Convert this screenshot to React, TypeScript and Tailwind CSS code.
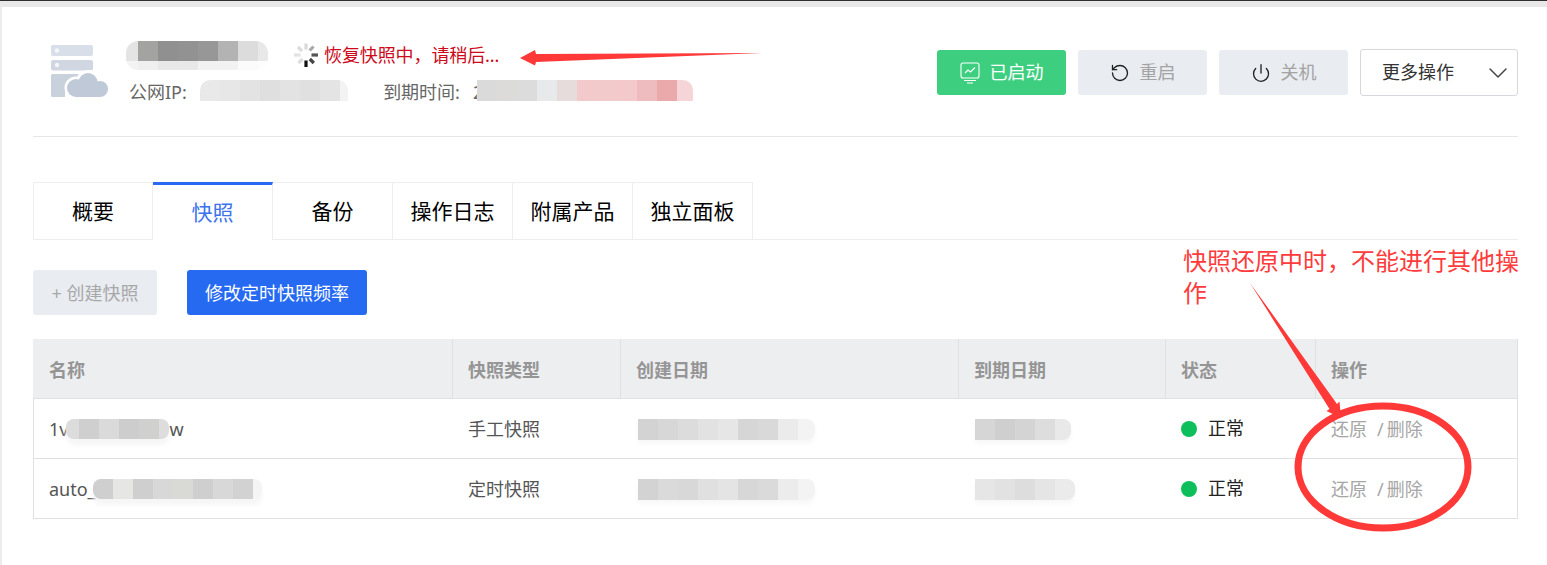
import React from 'react';
import { ChevronDown, Power, RotateCcw } from 'lucide-react';

type MosaicProps = { cells: string[]; widths?: number[]; className?: string };

// redacted bits of the screenshot: one row of flat blocks
const Mosaic: React.FC<MosaicProps> = ({ cells, widths, className }) => (
  <span className={`inline-flex shrink-0 overflow-hidden ${className ?? ''}`}>
    {cells.map((c, i) => (
      <span key={i} className="block h-full" style={{ backgroundColor: c, width: widths ? widths[i] : 20 }} />
    ))}
  </span>
);

const ServerIcon = () => (
  <svg width="58" height="53" viewBox="0 0 58 53" className="shrink-0">
    <rect x="0" y="0" width="42" height="11" rx="2" fill="#d9dfe9" />
    <circle cx="6" cy="5.500" r="2.200" fill="#f4f6f9" />
    <rect x="0" y="15" width="42" height="10.500" rx="2" fill="#d0d7e3" />
    <circle cx="6" cy="20" r="2.200" fill="#f4f6f9" />
    <rect x="0" y="29" width="34" height="23" rx="1.500" fill="#c9d1dd" />
    <g fill="#ffffff">
      <circle cx="25" cy="43" r="11.500" />
      <circle cx="37" cy="37" r="12" />
      <rect x="14" y="42" width="30" height="11" />
    </g>
    <g fill="#bfc9d7">
      <circle cx="25" cy="43" r="9" />
      <circle cx="37" cy="37.500" r="9.500" />
      <circle cx="49" cy="44" r="8" />
      <rect x="25" y="42" width="24" height="10" />
    </g>
  </svg>
);

const Spinner = () => (
  <svg width="26" height="26" viewBox="0 0 26 26" className="shrink-0">
    <g strokeWidth="3.200" fill="none">
      <path d="M13 1.500v6" stroke="#d8d8d8" />
      <path d="M20.500 4.500l-3.800 4" stroke="#a8a8a8" />
      <path d="M25 13h-6.500" stroke="#555555" />
      <path d="M20.800 21l-4-4" stroke="#444444" />
      <path d="M13 25v-6.500" stroke="#111111" />
      <path d="M5.500 21l4-4" stroke="#dddddd" />
      <path d="M1 13h6.500" stroke="#e2e2e2" />
      <path d="M5 5l4 4" stroke="#dcdcdc" />
    </g>
  </svg>
);

const MonitorIcon = () => (
  <svg width="20" height="22" viewBox="0 0 20 22" fill="none" stroke="#ffffff" strokeWidth="1.100" className="shrink-0">
    <rect x="1" y="1" width="18" height="15" rx="2" />
    <path d="M5 11l3-3 2.500 2L15 5.500" />
    <path d="M4 18.500h12M7 21h6" />
  </svg>
);

const rows = [
  {
    name: (
      <span className="flex items-center">
        1v
        <Mosaic
          className="-ml-[2px] h-[20px] rounded-[8px] shadow-[0_6px_5px_#f6f6f6]"
          cells={['#dcdcdc', '#cfcfcf', '#dadada', '#cdcdcd', '#d0d0ce', '#dddddd']}
          widths={[13, 20, 20, 20, 20, 10]}
        />
        w
      </span>
    ),
    type: '手工快照',
    created: ['#d3d3d3', '#d7d7d7', '#dcdcdc', '#e2e2e2', '#e6e6e6', '#d6d6d6', '#d9d9d9', '#ebebeb', '#f3f3f3'],
    createdWidths: [20, 20, 20, 20, 20, 20, 20, 20, 17],
    expire: ['#d6d6d6', '#cfcfcf', '#d4d4d4', '#dddddd', '#e9e9e9'],
    expireWidths: [20, 20, 20, 20, 16],
  },
  {
    name: (
      <span className="flex items-center">
        auto_
        <Mosaic
          className="-ml-[3px] h-[20px] rounded-[8px] shadow-[0_6px_5px_#f6f6f6]"
          cells={['#cfcfcf', '#e6e6e4', '#cfcfd0', '#d8d8d8', '#d9d9d5', '#cfcfd0', '#d8d8d8', '#d2d2d2', '#f4f4f4']}
          widths={[20, 20, 20, 20, 20, 20, 20, 20, 9]}
        />
      </span>
    ),
    type: '定时快照',
    created: ['#d3d3d3', '#dadada', '#d8d8d8', '#e0e0e0', '#e4e4e4', '#d7d7d7', '#dadada', '#ececec', '#f3f3f3'],
    createdWidths: [20, 20, 20, 20, 20, 20, 20, 20, 17],
    expire: ['#e6e6e6', '#e2e2e2', '#dddddd', '#e5e5e5', '#ebebeb'],
    expireWidths: [20, 20, 20, 20, 20],
  },
];

const tabs = ['概要', '快照', '备份', '操作日志', '附属产品', '独立面板'];

const App: React.FC = () => {
  return (
    <div className="relative h-[565px] w-full overflow-hidden bg-white font-['Noto_Sans','Noto_Sans_CJK_SC',sans-serif]">
      <div className="h-[7px] border-t border-[#2e2e2e] bg-[#e8e8e8]" />
      <div className="flex h-[558px]">
        <div className="w-[2px] bg-[#ececec]" />
        <div className="ml-[31px] w-[1485px]">
          {/* header */}
          <div className="flex h-[130px] items-start justify-between border-b border-[#e6e6e6]">
            <div className="flex items-start pt-[31px]">
              <div className="ml-[18px] mt-[7px]">
                <ServerIcon />
              </div>
              <div className="ml-[17px] flex flex-col">
                <div className="flex h-[34px] items-center">
                  <div className="flex w-[142px] flex-col overflow-hidden rounded-[12px]">
                    <Mosaic
                      className="h-[20px]"
                      cells={['#e4e4e4', '#a3a3a1', '#8f908f', '#929292', '#979797', '#b3b3b4', '#dcdcdc', '#e8e8e8']}
                      widths={[12, 20, 20, 20, 20, 20, 20, 10]}
                    />
                    <Mosaic
                      className="h-[9px]"
                      cells={['#f3f3f3', '#efefef', '#e8e8e8', '#e8e8e8', '#f2f2f2', '#f2f2f2', '#fbfbfb', '#fdfdfd']}
                      widths={[12, 20, 20, 20, 20, 20, 20, 10]}
                    />
                  </div>
                  <div className="ml-[25px]">
                    <Spinner />
                  </div>
                  <span className="ml-[5px] mt-[1px] text-[18px] tracking-[-0.1px] text-[#cc0a1a]">恢复快照中，请稍后...</span>
                </div>
                <div className="mt-[8px] flex h-[24px] items-center pl-[3px] text-[18px] text-[#666666]">
                  <span>公网IP:</span>
                  <span className="ml-[13px]">1</span>
                  <Mosaic
                    className="-ml-[10px] h-[21px] self-start rounded-t-[10px]"
                    cells={['#e8e9e8', '#e6e7e6', '#e3e3e3', '#dfdfdf', '#e3e3e3', '#e0e0e0', '#e4e4e4', '#f3f3f3']}
                    widths={[20, 20, 20, 20, 20, 20, 20, 8]}
                  />
                  <span className="ml-[35px]">到期时间:</span>
                  <span className="ml-[13px]">2</span>
                  <Mosaic
                    className="-ml-[6px] h-[21px] self-start rounded-tr-[10px]"
                    cells={['#dadada', '#dcdbd9', '#dcdcdc', '#e8e9ea', '#e6dcdc', '#f2cacc', '#f3c9cb', '#eebcbe', '#eaa9ab', '#f5d5d8']}
                    widths={[20, 20, 20, 20, 20, 40, 20, 20, 20, 16]}
                  />
                </div>
              </div>
            </div>
            <div className="flex items-center gap-[12px] pt-[42px] text-[18px]">
              <div className="flex h-[45px] w-[129px] items-center justify-center gap-[10px] rounded-[3px] bg-[#3dcf7f] text-white">
                <MonitorIcon />
                <span>已启动</span>
              </div>
              <div className="flex h-[45px] w-[129px] items-center justify-center gap-[10px] rounded-[3px] bg-[#e9ecf1] text-[#a3a3a3]">
                <RotateCcw size={20} strokeWidth={1.6} className="text-[#222222]" />
                <span>重启</span>
              </div>
              <div className="flex h-[45px] w-[129px] items-center justify-center gap-[10px] rounded-[3px] bg-[#e9ecf1] text-[#a3a3a3]">
                <Power size={20} strokeWidth={1.6} className="text-[#222222]" />
                <span>关机</span>
              </div>
              <div className="flex h-[47px] w-[158px] items-center justify-between rounded-[3px] border border-[#d6d8de] pl-[21px] pr-[3px] text-[#333333]">
                <span>更多操作</span>
                <ChevronDown size={32} strokeWidth={1.1} className="text-[#444444]" />
              </div>
            </div>
          </div>

          {/* tabs */}
          <div className="mt-[45px] flex h-[58px] border-b border-[#eeeeee]">
            {tabs.map((t, i) =>
              i === 1 ? (
                <div
                  key={t}
                  className="relative -mb-[1px] flex h-[58px] w-[120px] items-center justify-center border-r border-t-[3px] border-r-[#eeeeee] border-t-[#2a6af3] bg-white text-[21px] text-[#3b72ee]"
                >
                  {t}
                </div>
              ) : (
                <div
                  key={t}
                  className={`flex w-[120px] items-center justify-center border-r border-t border-[#eeeeee] pt-[2px] text-[21px] text-black ${i === 0 ? 'border-l' : ''}`}
                >
                  {t}
                </div>
              ),
            )}
          </div>

          {/* toolbar */}
          <div className="mt-[30px] flex gap-[30px] text-[18px]">
            <div className="flex h-[45px] w-[124px] items-center justify-center rounded-[3px] bg-[#e9ecf1] pt-[1px] text-[#a8a8a8]">+ 创建快照</div>
            <div className="flex h-[45px] w-[180px] items-center justify-center rounded-[3px] bg-[#266af2] pt-[1px] text-white">修改定时快照频率</div>
          </div>

          {/* snapshots table */}
          <table className="mt-[24px] w-[1485px] table-fixed border-separate border-spacing-0 text-left text-[18px]">
            <colgroup>
              <col className="w-[420px]" />
              <col className="w-[168px]" />
              <col className="w-[338px]" />
              <col className="w-[207px]" />
              <col className="w-[150px]" />
              <col className="w-[202px]" />
            </colgroup>
            <thead>
              <tr className="h-[60px] bg-[#edeef0] text-[#959595]">
                <th className="border-b border-r border-[#e0e1e3] pl-[16px] pt-[3px] font-bold">名称</th>
                <th className="border-b border-r border-[#e0e1e3] pl-[15px] pt-[3px] font-bold">快照类型</th>
                <th className="border-b border-r border-[#e0e1e3] pl-[15px] pt-[3px] font-bold">创建日期</th>
                <th className="border-b border-r border-[#e0e1e3] pl-[15px] pt-[3px] font-bold">到期日期</th>
                <th className="border-b border-r border-[#e0e1e3] pl-[15px] pt-[3px] font-bold">状态</th>
                <th className="border-b border-r border-[#e0e1e3] pl-[15px] pt-[3px] font-bold">操作</th>
              </tr>
            </thead>
            <tbody>
              {rows.map((r) => (
                <tr key={r.type} className="h-[60px] text-[#555555]">
                  <td className="border-b border-l border-[#e0e1e3] pl-[15px] pt-[1px]">{r.name}</td>
                  <td className="border-b border-[#e0e1e3] pl-[15px] pt-[1px]">{r.type}</td>
                  <td className="border-b border-[#e0e1e3] pl-[17px] pt-[1px]">
                    <span className="flex items-center">
                      <Mosaic className="h-[21px] rounded-r-[8px] shadow-[0_4px_5px_#f8f8f8]" cells={r.created} widths={r.createdWidths} />
                    </span>
                  </td>
                  <td className="border-b border-[#e0e1e3] pl-[16px] pt-[1px]">
                    <span className="flex items-center">
                      <Mosaic className="h-[21px] rounded-r-[8px] shadow-[0_4px_5px_#f8f8f8]" cells={r.expire} widths={r.expireWidths} />
                    </span>
                  </td>
                  <td className="border-b border-[#e0e1e3] pl-[15px]">
                    <span className="flex items-center gap-[11px] text-[#222222]">
                      <span className="h-[16px] w-[16px] rounded-full bg-[#0dbf5b]" />
                      正常
                    </span>
                  </td>
                  <td className="border-b border-r border-[#e0e1e3] pl-[15px] pt-[1px] text-[#a6a6a6]">
                    <span className="flex items-center">
                      还原<span className="ml-[10px] mr-[3px]">/</span>删除
                    </span>
                  </td>
                </tr>
              ))}
            </tbody>
          </table>
        </div>
      </div>

      {/* red annotations drawn over the page */}
      <svg width="1547" height="565" viewBox="0 0 1547 565" className="pointer-events-none absolute left-0 top-0">
        <path d="M762 53 536 54 535 50 520 58 535 65.500 536 62z" fill="#ff3838" />
        <path d="M1250 283 1337 404 1339.500 401.500 1341 418 1326.500 411 1329.500 409z" fill="#ff3838" />
        <ellipse cx="1383" cy="467" rx="85" ry="61" fill="none" stroke="#ff3838" strokeWidth="7" />
      </svg>
      <div className="absolute left-[1183px] top-[245px] w-[342px] text-[24px] leading-[32px] text-[#ff3b3b]">
        快照还原中时，不能进行其他操作
      </div>
    </div>
  );
};

export default App;
